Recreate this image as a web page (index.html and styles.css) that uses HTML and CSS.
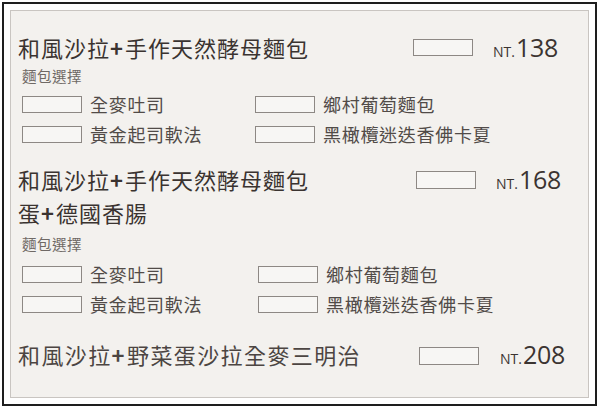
FILE: index.html
```html
<!DOCTYPE html>
<html lang="zh-Hant">
<head>
<meta charset="utf-8">
<title>Menu</title>
<link rel="stylesheet" href="styles.css">
</head>
<body>
<div class="frame">
  <div class="card">
    <div class="item item--a">
      <div class="title">和風沙拉<span class="plus">+</span>手作天然酵母麵包</div>
      <div class="box"></div>
      <div class="price"><span class="nt">NT.</span><span class="amount">138</span></div>
    </div>
    <div class="sub">麵包選擇</div>
    <div class="options">
      <div class="opt"><span class="box"></span><span class="opt-text">全麥吐司</span></div>
      <div class="opt"><span class="box"></span><span class="opt-text">鄉村葡萄麵包</span></div>
      <div class="opt"><span class="box"></span><span class="opt-text">黃金起司軟法</span></div>
      <div class="opt"><span class="box"></span><span class="opt-text">黑橄欖迷迭香佛卡夏</span></div>
    </div>

    <div class="item item--b">
      <div class="title title--two">和風沙拉<span class="plus">+</span>手作天然酵母麵包<br>蛋<span class="plus">+</span>德國香腸</div>
      <div class="box"></div>
      <div class="price"><span class="nt">NT.</span><span class="amount">168</span></div>
    </div>
    <div class="sub sub--b">麵包選擇</div>
    <div class="options options--b">
      <div class="opt"><span class="box"></span><span class="opt-text">全麥吐司</span></div>
      <div class="opt"><span class="box"></span><span class="opt-text">鄉村葡萄麵包</span></div>
      <div class="opt"><span class="box"></span><span class="opt-text">黃金起司軟法</span></div>
      <div class="opt"><span class="box"></span><span class="opt-text">黑橄欖迷迭香佛卡夏</span></div>
    </div>

    <div class="item item--c">
      <div class="title title--soft">和風沙拉<span class="plus">+</span>野菜蛋沙拉全麥三明治</div>
      <div class="box"></div>
      <div class="price"><span class="nt">NT.</span><span class="amount">208</span></div>
    </div>
  </div>
</div>
</body>
</html>
```

FILE: styles.css
```css
html, body {
  margin: 0;
  padding: 0;
  background: #ffffff;
}

.frame {
  box-sizing: border-box;
  margin: 2px 0 0 2px;
  width: 595px;
  height: 404px;
  border: 2px solid #1e1e1e;
  padding: 6px;
  background: #ffffff;
}

.card {
  box-sizing: border-box;
  height: 100%;
  border: 1px solid #c9c5c1;
  background: #f3f1ee;
  padding: 21px 0 0 7px;
  font-family: "Noto Sans CJK TC", "Noto Sans", sans-serif;
  color: #3b3431;
}

.item {
  display: grid;
  grid-template-columns: 375px 60px auto;
  column-gap: 20px;
  align-items: start;
}

.item--b {
  grid-template-columns: 378px 60px auto;
  margin-top: 14px;
}

.item--c {
  grid-template-columns: 381px 61px auto;
  margin-top: 20px;
}

.title {
  font-size: 22px;
  line-height: 30px;
  height: 30px;
  letter-spacing: 1px;
  white-space: nowrap;
  color: #3a3330;
}

.title--two {
  line-height: 33px;
  height: 66px;
}

.title--soft {
  letter-spacing: 1.4px;
  color: #4c4542;
}

.plus {
  font-weight: 700;
  margin: 0 1px 0 0;
}

.item .box {
  margin-top: 7px;
  height: 17px;
}

.item--b .box {
  margin-top: 8px;
  height: 18px;
}

.item--c .box {
  margin-top: 8px;
  height: 18px;
}

.box {
  display: block;
  box-sizing: border-box;
  width: 60px;
  height: 17px;
  border: 1px solid #8d8884;
  background: #f7f6f4;
}

.price {
  display: flex;
  align-items: baseline;
  height: 30px;
  line-height: 30px;
  font-family: "Open Sans", "Liberation Sans", sans-serif;
  color: #3b3431;
}

.item--b .price {
  height: 33px;
  line-height: 33px;
}

.nt {
  font-size: 14px;
  letter-spacing: 0;
  margin-right: 1px;
}

.amount {
  font-size: 25px;
  letter-spacing: -0.3px;
}

.sub {
  margin: 4px 0 0 4px;
  font-size: 14.5px;
  line-height: 20px;
  letter-spacing: 0.5px;
  color: #6f6965;
}

.sub--b {
  margin-top: 5px;
}

.options {
  display: grid;
  grid-template-columns: 233px auto;
  grid-auto-rows: 30px;
  margin: 3px 0 0 4px;
}

.options--b {
  grid-template-columns: 236px auto;
  margin-top: 5px;
}

.opt {
  display: flex;
  align-items: center;
  gap: 8px;
}

.opt-text {
  font-size: 18px;
  line-height: 24px;
  letter-spacing: 0.7px;
  color: #514b48;
  white-space: nowrap;
}
```
